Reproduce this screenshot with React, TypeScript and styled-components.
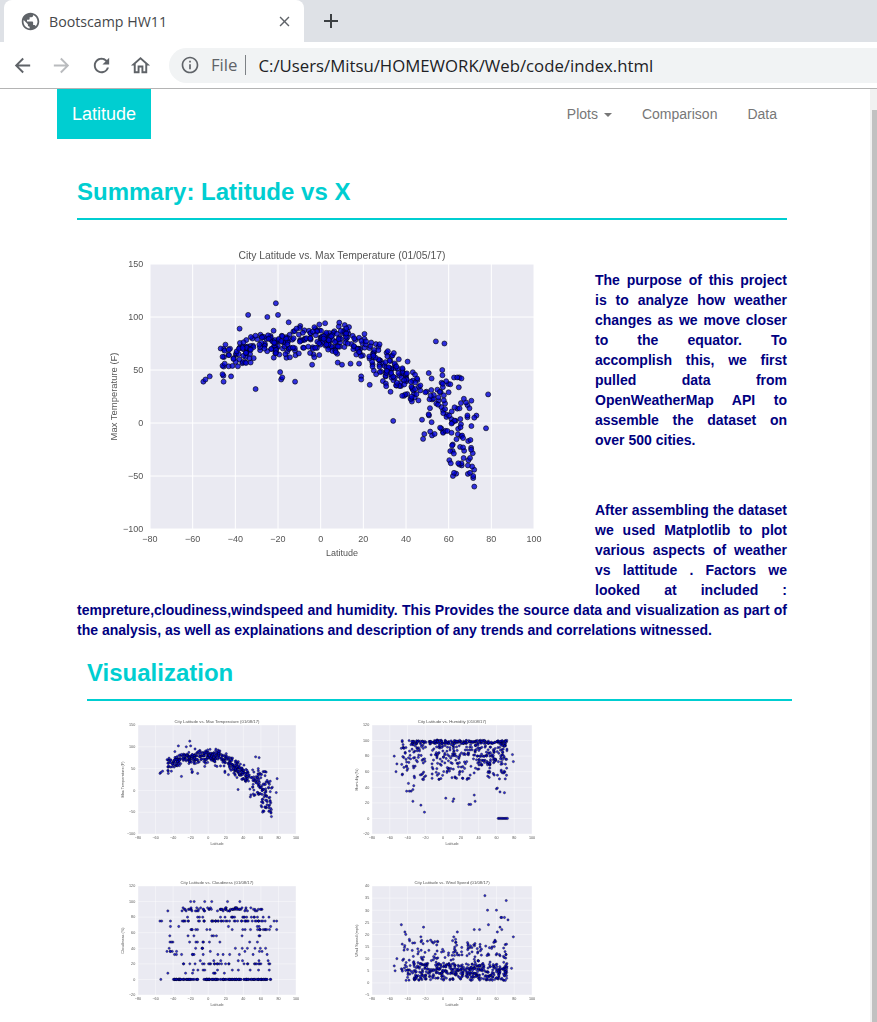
import React from "react";
import styled, { createGlobalStyle } from "styled-components";
import { MdPublic, MdClose, MdAdd, MdArrowBack, MdArrowForward, MdRefresh, MdOutlineHome, MdInfoOutline } from "react-icons/md";

const Global = createGlobalStyle`
  html, body { margin: 0; padding: 0; background: #fff; overflow: hidden; }
  body { font-family: "Liberation Sans", Arial, sans-serif; }
`;

const Frame = styled.div`width: 877px; height: 1022px; display: flex; flex-direction: column; overflow: hidden;`;
const TabStrip = styled.div`height: 42px; background: #dee1e6; display: flex; align-items: stretch; flex-shrink: 0;`;
const Tab = styled.div`
  width: 300px; margin-left: 4px; background: #fff; border-radius: 8px 8px 0 0;
  display: flex; align-items: center; padding: 0 11px 0 16px; box-sizing: border-box; color: #3c4043;
`;
const Favicon = styled(MdPublic)`color: #5f6368; font-size: 21px; flex-shrink: 0;`;
const TabTitle = styled.span`font: 400 14.2px "Open Sans", sans-serif; margin-left: 8px; flex: 1; color: #45474a;`;
const TabClose = styled(MdClose)`color: #5f6368; font-size: 17px;`;
const NewTab = styled(MdAdd)`color: #3c4043; font-size: 24px; margin: 9px 0 0 15px;`;
const Toolbar = styled.div`
  height: 46px; background: #fff; border-bottom: 1px solid #b4b4b4; flex-shrink: 0;
  display: flex; align-items: center; box-sizing: content-box; padding-left: 10px;
`;
const NavIcon = styled.span<{ $off?: boolean }>`
  width: 24px; height: 24px; margin-right: 15.6px; display: flex; align-items: center; justify-content: center;
  color: ${p => (p.$off ? "#b9bbbe" : "#5f6368")}; font-size: 23px;
`;
const Omnibox = styled.div`
  margin-left: 0.6px; flex: 1; height: 35px; background: #f1f3f4; border-radius: 18px 0 0 18px;
  display: flex; align-items: center; padding-left: 11px; font: 400 16.75px "Open Sans", sans-serif;
`;
const InfoIcon = styled(MdInfoOutline)`color: #5f6368; font-size: 20px;`;
const Scheme = styled.span`color: #5f6368; margin-left: 11px; padding-right: 8px; border-right: 1px solid #7d8185; line-height: 20px;`;
const Url = styled.span`color: #202124; margin-left: 12px;`;

const PageRow = styled.div`flex: 1; display: flex; min-height: 0;`;
const Page = styled.div`flex: 1; min-width: 0; background: #fff;`;
const ScrollTrack = styled.div`width: 7px; background: #f1f1f1; padding-top: 21px; box-sizing: border-box; display: flex; justify-content: flex-end;`;
const ScrollThumb = styled.div`width: 5px; height: 100%; background: #c1c1c1;`;

const NavBar = styled.nav`height: 50px; margin-left: 57px; width: 735px; display: flex; justify-content: space-between;`;
const Brand = styled.a`background: #00ced1; color: #fff; font-size: 18px; line-height: 50px; padding: 0 15px;`;
const NavLinks = styled.div`display: flex;`;
const NavLink = styled.a`color: #777; font-size: 14px; line-height: 50px; padding: 0 15px; display: flex; align-items: center;`;
const Caret = styled.span`
  display: inline-block; width: 0; height: 0; margin-left: 6px; margin-top: 1px;
  border-top: 4px solid #777; border-left: 4px solid transparent; border-right: 4px solid transparent;
`;

const Main = styled.main`margin-left: 77px; width: 710px;`;
const Heading = styled.h2`color: #00ced1; font-size: 24px; font-weight: 700; line-height: 26px; margin: 0;`;
const SummaryHead = styled.header`padding-top: 40px; height: 39px; border-bottom: 2px solid #00ced1;`;
const Article = styled.div`color: #000080; font-size: 14px; font-weight: 700; line-height: 20px; text-align: justify; margin-top: 0;`;
const Figure = styled.div`float: left; width: 518px; height: 345px; margin-top: 28px;`;
const TopGap = styled.div`height: 50px;`;
const Para = styled.p`margin: 0 0 50px;`;
const LastPara = styled.p`margin: 0;`;
const VizSection = styled.section`margin: 0 0 0 10px; width: 705px; clear: both; padding-top: 20px;`;
const VizHead = styled.header`height: 39px; box-sizing: content-box; border-bottom: 2px solid #00ced1;`;
const ThumbGrid = styled.div`display: grid; grid-template-columns: 234px 1fr; row-gap: 26px; margin-left: 28px; margin-top: 14px;`;

const Svg = styled.svg<{ $blur: number }>`display: block; filter: blur(${p => p.$blur}px);`;
const Tick = styled.text<{ $size: number }>`font-family: "Liberation Sans", Arial, sans-serif; font-weight: 400; font-size: ${p => p.$size}px; fill: #555;`;

type Pt = [number, number];
function rng(seed: number) {
  let s = seed;
  return () => { s = (s * 1664525 + 1013904223) % 4294967296; return s / 4294967296; };
}
const interp = (t: number[][], x: number) => {
  for (let i = 1; i < t.length; i++) if (x <= t[i][0]) {
    const f = (x - t[i - 1][0]) / (t[i][0] - t[i - 1][0]);
    return t[i - 1][1] + f * (t[i][1] - t[i - 1][1]);
  }
  return t[t.length - 1][1];
};
const lat = (r: () => number) => {
  const u = r();
  if (u < 0.06) return -47 + r() * 12;
  if (u < 0.3) return -35 + r() * 30;
  if (u < 0.55) return -5 + r() * 28;
  return 23 + Math.pow(r(), 0.9) * 49;
};
const curve = [[-60, 45], [-46, 58], [-35, 68], [-25, 75], [-10, 78], [0, 79], [15, 78], [22, 70], [30, 54], [40, 38], [50, 27], [60, 16], [72, 0]];
const tempData = (): Pt[] => {
  const r = rng(7); const out: Pt[] = [];
  for (let i = 0; i < 480; i++) {
    const x = lat(r);
    const w = x > 55 ? 34 : x > 40 ? 26 : x > 20 ? 22 : 17;
    let y = interp(curve, x) + (r() + r() - 1) * w;
    if (x > 45 && x < 66 && r() < 0.3) y = -12 + r() * 24;
    if (x > 60 && r() < 0.35) y = -50 + r() * 40;
    out.push([x, y]);
  }
  const extra: Pt[] = [[-55, 39], [-54, 41], [-52, 44], [-46, 46], [-45.5, 39], [-42, 44], [-34, 102], [-25, 100], [-21, 113], [-20, 102], [-38, 89], [-30.5, 32], [-19, 48], [-18.5, 41], [-18, 43], [-12, 39], [-15, 95], [34, 2], [54, 77], [58, 75], [48, -15], [57, 50], [78.5, 27], [77.5, -5], [73, 7], [72, 5], [72, -60], [71.5, -52], [71.5, -50], [62, -50], [62.5, -47], [61, -38], [66, -38], [64.5, -38], [69, -48], [70, -47], [71, -41], [69, -40], [67, -33], [70, -33], [-43, 64], [-46, 54], [-45, 56], [-4, 55], [-3, 62], [8, 57], [10, 55], [14, 56], [18, 56], [19, 44], [19, 41], [23, 36], [26, 46], [65, 43], [66, 42], [64, 43], [52, 42]];
  return out.concat(extra);
};
const humidData = (): Pt[] => {
  const r = rng(11); const out: Pt[] = [];
  for (let i = 0; i < 130; i++) out.push([-37 + r() * 109, 96 + r() * 4.5]);
  for (let i = 0; i < 380; i++) {
    const x = lat(r);
    const y = 100 - Math.pow(r(), 1.5) * 50;
    out.push([x, x > 40 && x < 62 && r() < 0.5 ? 68 + r() * 24 : y]);
  }
  const extra: Pt[] = [[-55, 80], [-53, 60], [-52, 70], [-47, 90], [-46, 100], [-44, 90], [-46, 56], [-39, 45], [-41, 35], [-38, 35], [-36, 35], [-34, 37], [-33, 42], [-34, 22], [-25, 17], [-21, 8], [-22, 50], [3, 26], [11, 22], [12, 25], [29, 18], [31, 18], [36, 22], [35, 30], [60, 38], [61, 39], [64, 34], [69, 33], [78, 82], [79, 73]];
  for (let x = 62; x < 73; x += 1.3) extra.push([x, 0]);
  return out.concat(extra);
};
const cloudData = (): Pt[] => {
  const r = rng(23); const out: Pt[] = [];
  const pick = (vs: number[], n: number, a = -45, b = 72) => { for (let i = 0; i < n; i++) out.push([a + r() * (b - a), vs[Math.floor(r() * vs.length)]]); };
  pick([0], 45, -40, -12); pick([0], 110, -5, 72);
  pick([90, 92, 90, 88], 70, -30, 70);
  pick([75], 45, -30, 65); pick([80], 20, -35, 72);
  pick([20, 20, 8, 12, 40, 36, 48, 56, 68, 64, 32, 24], 130);
  const extra: Pt[] = [[-54, 0], [-55, 75], [-53, 75], [-43, 75], [78, 75], [75, 75], [-46, 88], [-20, 100], [-16, 100], [-4, 100], [4, 100], [22, 100], [36, 100], [78, 64], [-46, 8], [-47, 36], [-43, 36]];
  return out.concat(extra);
};
const windData = (): Pt[] => {
  const r = rng(31); const out: Pt[] = [];
  for (let i = 0; i < 520; i++) {
    const x = lat(r);
    const y = r() < 0.62 ? 1 + r() * 7 : 3 + r() * (x > -5 && x < 10 ? 11 : 15);
    out.push([x, y]);
  }
  const extra: Pt[] = [[-55, 7], [-54, 5], [-52, 10], [-47, 24], [-46, 16], [-43, 21], [-42, 20], [-38, 18], [-25, 19], [-22, 23], [12, 19], [14, 18], [16, 21], [35, 22], [41, 22], [47, 36], [50, 30], [51, 24], [60, 30], [71, 34], [69, 27], [73, 26], [65, 27], [66, 27], [64, 23], [66, 22], [61, 21], [79, 19], [77, 6], [58, 17]];
  return out.concat(extra);
};

type ChartProps = {
  title: string; yLabel: string; data: Pt[]; yMin: number; yMax: number; yStep: number;
  plotW: number; plotH: number; left: number; top: number; width: number; height: number;
  font: number; r: number; blur: number; stroke: number;
};
const fmt = (n: number) => (n < 0 ? "\u2212" + Math.abs(n) : String(n));

function Chart({ title, yLabel, data, yMin, yMax, yStep, plotW, plotH, left, top, width, height, font, r, blur, stroke }: ChartProps) {
  const sx = (v: number) => left + ((v + 80) / 180) * plotW;
  const sy = (v: number) => top + ((yMax - v) / (yMax - yMin)) * plotH;
  const xs: number[] = []; for (let v = -80; v <= 100; v += 20) xs.push(v);
  const ys: number[] = []; for (let v = yMin; v <= yMax; v += yStep) ys.push(v);
  const gw = font / 9;
  return (
    <Svg $blur={blur} width={width} height={height} viewBox={`0 0 ${width} ${height}`}>
      <rect x={left} y={top} width={plotW} height={plotH} fill="#eaeaf2" />
      {xs.map(v => <line key={v} x1={sx(v)} x2={sx(v)} y1={top} y2={top + plotH} stroke="#fff" strokeWidth={gw} />)}
      {ys.map(v => <line key={v} x1={left} x2={left + plotW} y1={sy(v)} y2={sy(v)} stroke="#fff" strokeWidth={gw} />)}
      {data.map((p, i) => <circle key={i} cx={sx(p[0])} cy={sy(p[1])} r={r} fill="#0000d8" fillOpacity={0.8} stroke="#000" strokeWidth={stroke} />)}
      {xs.map(v => <Tick key={v} $size={font} x={sx(v)} y={top + plotH + font * 1.4} textAnchor="middle">{fmt(v)}</Tick>)}
      {ys.map(v => <Tick key={v} $size={font} x={left - font * 0.75} y={sy(v) + font * 0.35} textAnchor="end">{fmt(v)}</Tick>)}
      <Tick $size={font * 1.15} x={left + plotW / 2} y={top - font * 0.55} textAnchor="middle">{title}</Tick>
      <Tick $size={font} x={left + plotW / 2} y={top + plotH + font * 2.95} textAnchor="middle">Latitude</Tick>
      <Tick $size={font * 1.05} transform={`translate(${left - font * 3.7} ${top + plotH / 2}) rotate(-90)`} textAnchor="middle">{yLabel}</Tick>
    </Svg>
  );
}

const temp = tempData(), humid = humidData(), cloud = cloudData(), wind = windData();
const thumb = { left: 23, top: 10, plotH: 109, height: 135, font: 3.7, r: 1.15, blur: 0.5, stroke: 0.35 };

export default function App() {
  return (
    <Frame>
      <Global />
      <TabStrip>
        <Tab>
          <Favicon />
          <TabTitle>Bootscamp HW11</TabTitle>
          <TabClose />
        </Tab>
        <NewTab />
      </TabStrip>
      <Toolbar>
        <NavIcon><MdArrowBack /></NavIcon>
        <NavIcon $off><MdArrowForward /></NavIcon>
        <NavIcon><MdRefresh /></NavIcon>
        <NavIcon><MdOutlineHome /></NavIcon>
        <Omnibox>
          <InfoIcon />
          <Scheme>File</Scheme>
          <Url>C:/Users/Mitsu/HOMEWORK/Web/code/index.html</Url>
        </Omnibox>
      </Toolbar>
      <PageRow>
        <Page>
          <NavBar>
            <Brand>Latitude</Brand>
            <NavLinks>
              <NavLink>Plots<Caret /></NavLink>
              <NavLink>Comparison</NavLink>
              <NavLink>Data</NavLink>
            </NavLinks>
          </NavBar>
          <Main>
            <SummaryHead><Heading>Summary: Latitude vs X</Heading></SummaryHead>
            <Article>
              <Figure>
                <Chart title="City Latitude vs. Max Temperature (01/05/17)" yLabel="Max Temperature (F)" data={temp}
                  yMin={-100} yMax={150} yStep={50} plotW={384} plotH={265} left={73} top={16} width={518} height={315}
                  font={9} r={2.5} blur={0.35} stroke={0.6} />
              </Figure>
              <TopGap />
              <Para>The purpose of this project is to analyze how weather changes as we move closer to the equator. To accomplish this, we first pulled data from OpenWeatherMap API to assemble the dataset on over 500 cities.</Para>
              <LastPara>After assembling the dataset we used Matplotlib to plot various aspects of weather vs lattitude . Factors we looked at included : tempreture,cloudiness,windspeed and humidity. This Provides the source data and visualization as part of the analysis, as well as explainations and description of any trends and correlations witnessed.</LastPara>
            </Article>
            <VizSection>
              <VizHead><Heading>Visualization</Heading></VizHead>
              <ThumbGrid>
                <Chart {...thumb} width={190} plotW={158} title="City Latitude vs. Max Temperature (01/08/17)" yLabel="Max Temperature (F)" data={temp} yMin={-100} yMax={150} yStep={50} />
                <Chart {...thumb} width={190} plotW={160} title="City Latitude vs. Humidity (01/08/17)" yLabel="Humidity (%)" data={humid} yMin={-20} yMax={120} yStep={20} />
                <Chart {...thumb} width={190} plotW={158} title="City Latitude vs. Cloudiness (01/08/17)" yLabel="Cloudiness (%)" data={cloud} yMin={-20} yMax={120} yStep={20} />
                <Chart {...thumb} width={190} plotW={160} title="City Latitude vs. Wind Speed (01/08/17)" yLabel="Wind Speed (mph)" data={wind} yMin={-5} yMax={40} yStep={5} />
              </ThumbGrid>
            </VizSection>
          </Main>
        </Page>
        <ScrollTrack><ScrollThumb /></ScrollTrack>
      </PageRow>
    </Frame>
  );
}
